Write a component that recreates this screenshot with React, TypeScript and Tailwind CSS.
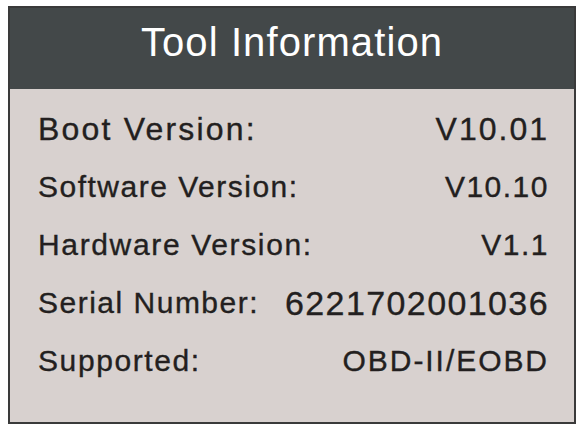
const rows = [
  { label: "Boot Version:", value: "V10.01", lc: "text-[32px] tracking-[2.2px]", vc: "text-[32px] tracking-[2px]" },
  { label: "Software Version:", value: "V10.10", lc: "text-[30px] tracking-[1.5px]", vc: "text-[30px] tracking-[1.5px]" },
  { label: "Hardware Version:", value: "V1.1", lc: "text-[30px] tracking-[1.65px]", vc: "text-[30px] tracking-[1.5px]" },
  { label: "Serial Number:", value: "6221702001036", lc: "text-[30px] tracking-[1.5px]", vc: "text-[34px] tracking-[1.4px]" },
  { label: "Supported:", value: "OBD-II/EOBD", lc: "text-[30px] tracking-[1.6px]", vc: "text-[30px] tracking-[1.95px]" },
];

export default function App() {
  return (
    <div className="w-[582px] h-[430px] bg-white pt-[6px] pl-[8px] font-['Liberation_Sans',Arial,sans-serif]">
      <div className="w-[568px] h-[418px] border-2 border-[#3a3a3a] bg-[#d8d1cf] flex flex-col">
        <div className="h-[81px] bg-[#434849] flex justify-center pt-[12px]">
          <h1 className="text-[40px] leading-[44px] tracking-[1.1px] text-white">Tool Information</h1>
        </div>
        <div className="flex flex-col pt-[11px] pl-[28px] pr-[25px] text-[#231f20] [-webkit-text-stroke:0.35px_#231f20]">
          {rows.map((r) => (
            <div key={r.label} className="h-[58px] flex items-center justify-between">
              <span className={`${r.lc} leading-[58px]`}>{r.label}</span>
              <span className={`${r.vc} leading-[58px]`}>{r.value}</span>
            </div>
          ))}
        </div>
      </div>
    </div>
  );
}
